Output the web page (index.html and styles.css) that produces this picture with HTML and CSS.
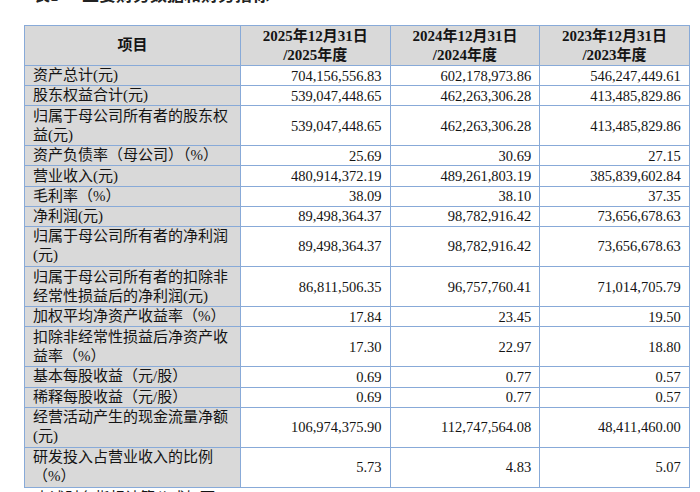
FILE: index.html
```html
<!DOCTYPE html>
<html lang="zh-CN">
<head>
<meta charset="utf-8">
<title>主要财务数据和财务指标</title>
<link rel="stylesheet" href="styles.css">
</head>
<body>
<div class="page">
  <div class="title"><span class="tno">表1</span><span class="tname">主要财务数据和财务指标</span></div>
  <table class="fin">
    <colgroup>
      <col class="c-label"><col class="c-num"><col class="c-num"><col class="c-num">
    </colgroup>
    <thead>
      <tr class="hdr">
        <th>项目</th>
        <th>2025年12月31日<br>/2025年度</th>
        <th>2024年12月31日<br>/2024年度</th>
        <th>2023年12月31日<br>/2023年度</th>
      </tr>
    </thead>
    <tbody>
      <tr class="r1"><td class="lbl">资产总计(元)</td><td>704,156,556.83</td><td>602,178,973.86</td><td>546,247,449.61</td></tr>
      <tr class="r1"><td class="lbl">股东权益合计(元)</td><td>539,047,448.65</td><td>462,263,306.28</td><td>413,485,829.86</td></tr>
      <tr class="r2"><td class="lbl">归属于母公司所有者的股东权益(元)</td><td>539,047,448.65</td><td>462,263,306.28</td><td>413,485,829.86</td></tr>
      <tr class="r1"><td class="lbl">资产负债率（母公司）（%）</td><td>25.69</td><td>30.69</td><td>27.15</td></tr>
      <tr class="r1"><td class="lbl">营业收入(元)</td><td>480,914,372.19</td><td>489,261,803.19</td><td>385,839,602.84</td></tr>
      <tr class="r1"><td class="lbl">毛利率（%）</td><td>38.09</td><td>38.10</td><td>37.35</td></tr>
      <tr class="r1"><td class="lbl">净利润(元)</td><td>89,498,364.37</td><td>98,782,916.42</td><td>73,656,678.63</td></tr>
      <tr class="r2"><td class="lbl">归属于母公司所有者的净利润(元)</td><td>89,498,364.37</td><td>98,782,916.42</td><td>73,656,678.63</td></tr>
      <tr class="r2"><td class="lbl">归属于母公司所有者的扣除非经常性损益后的净利润(元)</td><td>86,811,506.35</td><td>96,757,760.41</td><td>71,014,705.79</td></tr>
      <tr class="r1"><td class="lbl">加权平均净资产收益率（%）</td><td>17.84</td><td>23.45</td><td>19.50</td></tr>
      <tr class="r2"><td class="lbl">扣除非经常性损益后净资产收益率（%）</td><td>17.30</td><td>22.97</td><td>18.80</td></tr>
      <tr class="r1"><td class="lbl">基本每股收益（元/股）</td><td>0.69</td><td>0.77</td><td>0.57</td></tr>
      <tr class="r1"><td class="lbl">稀释每股收益（元/股）</td><td>0.69</td><td>0.77</td><td>0.57</td></tr>
      <tr class="r2"><td class="lbl">经营活动产生的现金流量净额(元)</td><td>106,974,375.90</td><td>112,747,564.08</td><td>48,411,460.00</td></tr>
      <tr class="r2"><td class="lbl">研发投入占营业收入的比例（%）</td><td>5.73</td><td>4.83</td><td>5.07</td></tr>
    </tbody>
  </table>
  <p class="note">上述财务指标计算公式如下：</p>
</div>
</body>
</html>
```

FILE: styles.css
```css
html, body {
  margin: 0;
  padding: 0;
  background: #ffffff;
}
body {
  width: 700px;
  height: 492px;
  overflow: hidden;
  font-family: "Liberation Serif", "Noto Sans CJK SC", serif;
  color: #141414;
}
.page {
  padding-left: 24px;
}
.title {
  margin-top: -13px;
  height: 17px;
  line-height: 17px;
  font-size: 17px;
  font-weight: bold;
  color: #222;
  padding-left: 9px;
  margin-bottom: 21px;
  white-space: nowrap;
  overflow: hidden;
}
.tno {
  display: inline-block;
  width: 49px;
}
.fin {
  border-collapse: collapse;
  table-layout: fixed;
  width: 665px;
}
.c-label { width: 216px; }
.c-num { width: 149.6px; }
.fin th,
.fin td {
  border: 1px solid #88aad8;
  padding: 0;
  vertical-align: middle;
}
.fin th {
  background: #d9d9d9;
  font-size: 15px;
  line-height: 19px;
  font-weight: bold;
  text-align: center;
}
.hdr { height: 40px; }
.r1 { height: 20.1px; }
.r2 { height: 40.2px; }
.fin td {
  font-size: 14.5px;
  line-height: 18px;
  text-align: right;
  padding-right: 8px;
  background: #ffffff;
}
.fin td.lbl {
  background: #d9d9d9;
  text-align: left;
  padding: 0 6px 0 8px;
  font-size: 15px;
  line-height: 19px;
}
.note {
  margin: 0 0 0 11px;
  font-size: 15px;
  line-height: 20px;
}
```
